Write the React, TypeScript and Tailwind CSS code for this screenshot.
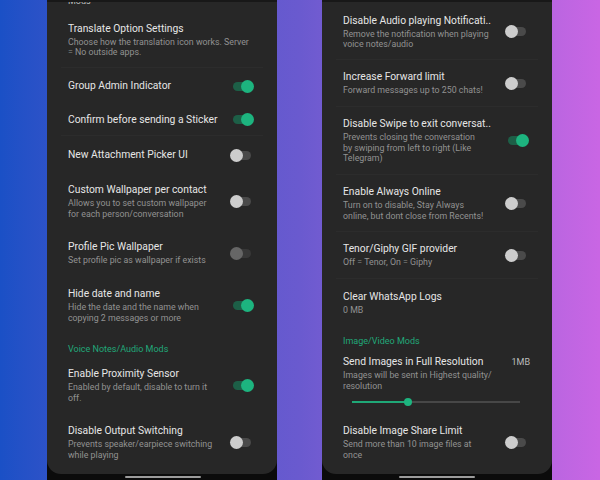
import React from "react";

type Tog = "on" | "off" | "dis" | undefined;

function Toggle({ state }: { state: Tog }) {
  if (!state) return null;
  const track =
    state === "on" ? "bg-[#1d5f47]" : state === "off" ? "bg-[#4a4a4a]" : "bg-[#383838]";
  const knob =
    state === "on"
      ? "right-0 bg-[#1db47f]"
      : state === "off"
      ? "left-0 bg-[#cdcdcd]"
      : "left-0 bg-[#666666]";
  return (
    <div className="relative w-[24px] h-[13px] shrink-0">
      <div className={`absolute left-[3px] right-[3px] top-[2px] h-[9px] rounded-full ${track}`} />
      <div className={`absolute top-0 w-[13px] h-[13px] rounded-full ${knob}`} />
    </div>
  );
}

function Row({
  h,
  title,
  sub = [],
  toggle,
  divider = true,
}: {
  h: string;
  title: string;
  sub?: string[];
  toggle?: Tog;
  divider?: boolean;
}) {
  return (
    <div
      className={`${h} mx-[14px] pl-[7px] pr-[9px] flex items-center justify-between shrink-0 ${
        divider ? "border-b border-[#2c2c2c]" : ""
      }`}
    >
      <div className="flex flex-col">
        <div className="text-[10.3px] leading-[14px] text-[#e6e6e6] whitespace-nowrap">{title}</div>
        {sub.length > 0 && (
          <div className="mt-[1px] flex flex-col">
            {sub.map((s, i) => (
              <div key={i} className="text-[8.8px] leading-[10.5px] text-[#929292] whitespace-nowrap">
                {s}
              </div>
            ))}
          </div>
        )}
      </div>
      <Toggle state={toggle} />
    </div>
  );
}

function Header({ h, text }: { h: string; text: string }) {
  return (
    <div className={`${h} mx-[14px] pl-[7px] flex items-center shrink-0`}>
      <div className="text-[9px] leading-[11px] text-[#21a779] whitespace-nowrap">{text}</div>
    </div>
  );
}

function Phone({ children, bar }: { children: React.ReactNode; bar: string }) {
  return (
    <div className="relative w-[230px] h-[480px] bg-[#0b0b0b] overflow-hidden shrink-0">
      <div className="relative h-[474px] bg-[#272727] rounded-b-[14px] overflow-hidden flex flex-col">
        {children}
        <div className="absolute top-0 left-0 right-0 h-[2px] bg-[#181818]" />
      </div>
      <div className={`absolute bottom-[2px] ${bar} w-[76px] h-[2px] rounded-full bg-[#9c9c9c]`} />
    </div>
  );
}

export default function App() {
  return (
    <div
      className="w-[600px] h-[480px] overflow-hidden flex pl-[47px] gap-[45px] bg-gradient-to-r from-[#1a50c6] via-[#6a5acf] to-[#c966e4]"
      style={{ fontFamily: "Roboto, 'Noto Sans', sans-serif" }}
    >
      <Phone bar="left-[78px]">
        <div className="h-[12px] mx-[14px] pl-[7px] shrink-0">
          <div className="-mt-[4px] text-[9px] leading-[11px] text-[#bdbdbd]">Mods</div>
        </div>
        <Row
          h="h-[56px]"
          title="Translate Option Settings"
          sub={["Choose how the translation icon works. Server", "= No outside apps."]}
        />
        <Row h="h-[36px]" title="Group Admin Indicator" toggle="on" divider={false} />
        <Row h="h-[32px]" title="Confirm before sending a Sticker" toggle="on" />
        <Row h="h-[38px]" title="New Attachment Picker UI" toggle="off" divider={false} />
        <Row
          h="h-[54px]"
          title="Custom Wallpaper per contact"
          sub={["Allows you to set custom wallpaper", "for each person/conversation"]}
          toggle="off"
          divider={false}
        />
        <Row
          h="h-[50px]"
          title="Profile Pic Wallpaper"
          sub={["Set profile pic as wallpaper if exists"]}
          toggle="dis"
          divider={false}
        />
        <Row
          h="h-[54px]"
          title="Hide date and name"
          sub={["Hide the date and the name when", "copying 2 messages or more"]}
          toggle="on"
          divider={false}
        />
        <Header h="h-[34px]" text="Voice Notes/Audio Mods" />
        <Row
          h="h-[38px]"
          title="Enable Proximity Sensor"
          sub={["Enabled by default, disable to turn it", "off."]}
          toggle="on"
          divider={false}
        />
        <Row
          h="h-[76px]"
          title="Disable Output Switching"
          sub={["Prevents speaker/earpiece switching", "while playing"]}
          toggle="off"
          divider={false}
        />
      </Phone>

      <Phone bar="left-[77px]">
        <div className="h-[4px] shrink-0" />
        <Row
          h="h-[56px]"
          title="Disable Audio playing Notificati.."
          sub={["Remove the notification when playing", "voice notes/audio"]}
          toggle="off"
        />
        <Row
          h="h-[47px]"
          title="Increase Forward limit"
          sub={["Forward messages up to 250 chats!"]}
          toggle="off"
        />
        <Row
          h="h-[68px]"
          title="Disable Swipe to exit conversat.."
          sub={["Prevents closing the conversation", "by swiping from left to right (Like", "Telegram)"]}
          toggle="on"
        />
        <Row
          h="h-[57px]"
          title="Enable Always Online"
          sub={["Turn on to disable, Stay Always", "online, but dont close from Recents!"]}
          toggle="off"
        />
        <Row
          h="h-[47px]"
          title="Tenor/Giphy GIF provider"
          sub={["Off = Tenor, On = Giphy"]}
          toggle="off"
        />
        <Row h="h-[48px]" title="Clear WhatsApp Logs" sub={["0 MB"]} divider={false} />
        <Header h="h-[28px]" text="Image/Video Mods" />
        <div className="h-[57px] mx-[14px] pl-[7px] pr-[8px] flex flex-col shrink-0">
          <div className="flex justify-between items-center">
            <div className="text-[10.3px] leading-[14px] text-[#e6e6e6] whitespace-nowrap">
              Send Images in Full Resolution
            </div>
            <div className="text-[9px] leading-[14px] text-[#bdbdbd]">1MB</div>
          </div>
          <div className="mt-[1px] flex flex-col">
            <div className="text-[8.8px] leading-[10.5px] text-[#929292] whitespace-nowrap">
              Images will be sent in Highest quality/
            </div>
            <div className="text-[8.8px] leading-[10.5px] text-[#929292] whitespace-nowrap">resolution</div>
          </div>
          <div className="relative ml-[9px] mr-[10px] mt-[10px] h-[2px] bg-[#474747]">
            <div className="absolute left-0 top-0 h-[2px] w-[56px] bg-[#1fa877]" />
            <div className="absolute left-[52px] -top-[3px] w-[8px] h-[8px] rounded-full bg-[#1db47f]" />
          </div>
        </div>
        <Row
          h="h-[60px]"
          title="Disable Image Share Limit"
          sub={["Send more than 10 image files at", "once"]}
          toggle="off"
          divider={false}
        />
      </Phone>
    </div>
  );
}
